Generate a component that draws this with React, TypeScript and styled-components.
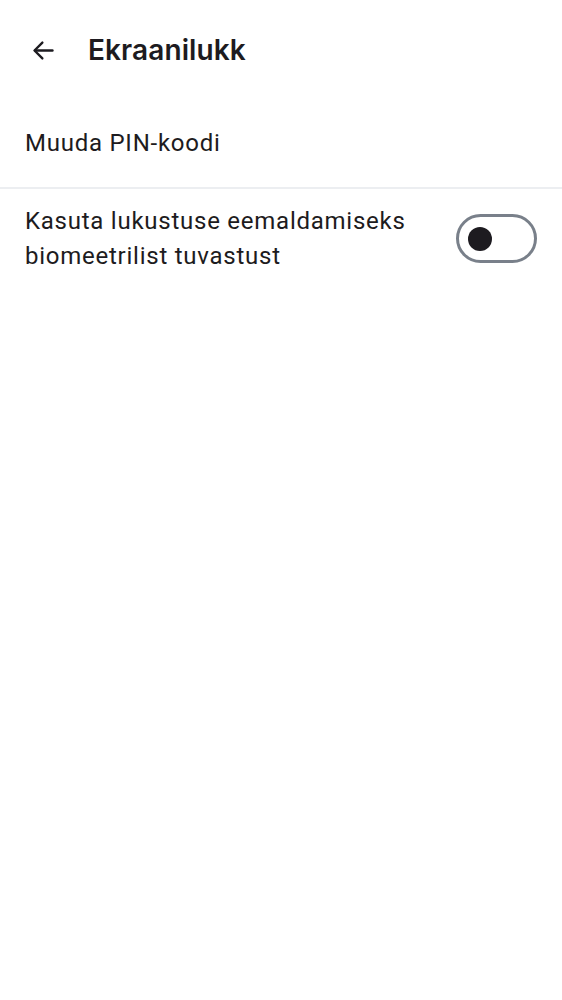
import React, { useState } from "react";
import styled, { createGlobalStyle } from "styled-components";

const Global = createGlobalStyle`
  html, body { margin: 0; padding: 0; background: #ffffff; }
  body { font-family: Roboto, "Noto Sans", sans-serif; color: #1d1b20; }
`;

const Page = styled.div`
  width: 562px;
  min-height: 1000px;
  background: #ffffff;
  display: flex;
  flex-direction: column;
`;

const Header = styled.header`
  height: 100px;
  display: flex;
  align-items: center;
  padding: 0 0 0 25px;
  gap: 27px;
`;

const BackButton = styled.button`
  width: 36px;
  height: 36px;
  border: none;
  background: none;
  padding: 0;
  display: flex;
  align-items: center;
  justify-content: center;
  color: #1d1b20;
`;

const Title = styled.h1`
  margin: 0;
  font-family: Inter, "Noto Sans", sans-serif;
  font-weight: 600;
  font-size: 28px;
  letter-spacing: 0.1px;
  color: #1d1b20;
`;

const LinkRow = styled.div`
  display: flex;
  align-items: center;
  padding: 0 25px;
  height: 87px;
  border-bottom: 2px solid #eceef1;
`;

const ToggleRow = styled.div`
  display: flex;
  align-items: flex-start;
  justify-content: space-between;
  padding: 15px 25px 11px 25px;
`;

const Label = styled.div`
  font-size: 24px;
  line-height: 35px;
  letter-spacing: 0.75px;
  color: #1d1b20;
  max-width: 400px;
`;

const Switch = styled.button<{ $on: boolean }>`
  flex: none;
  width: 81px;
  height: 49px;
  margin-top: 10px;
  border-radius: 25px;
  border: 3px solid ${(p) => (p.$on ? "#1d1b20" : "#79808a")};
  background: ${(p) => (p.$on ? "#1d1b20" : "#ffffff")};
  box-sizing: border-box;
  display: flex;
  align-items: center;
  justify-content: ${(p) => (p.$on ? "flex-end" : "flex-start")};
  padding: 0 9px;
  cursor: pointer;
`;

const Thumb = styled.span<{ $on: boolean }>`
  width: 24px;
  height: 24px;
  border-radius: 50%;
  background: ${(p) => (p.$on ? "#ffffff" : "#1d1b20")};
`;

export default function App() {
  const [on, setOn] = useState(false);
  return (
    <Page>
      <Global />
      <Header>
        <BackButton aria-label="Tagasi">
          <svg width="27" height="27" viewBox="0 0 24 24" fill="none" stroke="currentColor" strokeWidth="2.1" strokeLinecap="round" strokeLinejoin="round">
            <path d="M20 12H4.5" />
            <path d="M11 5l-7 7 7 7" />
          </svg>
        </BackButton>
        <Title>Ekraanilukk</Title>
      </Header>
      <LinkRow>
        <Label>Muuda PIN-koodi</Label>
      </LinkRow>
      <ToggleRow>
        <Label>Kasuta lukustuse eemaldamiseks biomeetrilist tuvastust</Label>
        <Switch $on={on} onClick={() => setOn(!on)} aria-pressed={on}>
          <Thumb $on={on} />
        </Switch>
      </ToggleRow>
    </Page>
  );
}
